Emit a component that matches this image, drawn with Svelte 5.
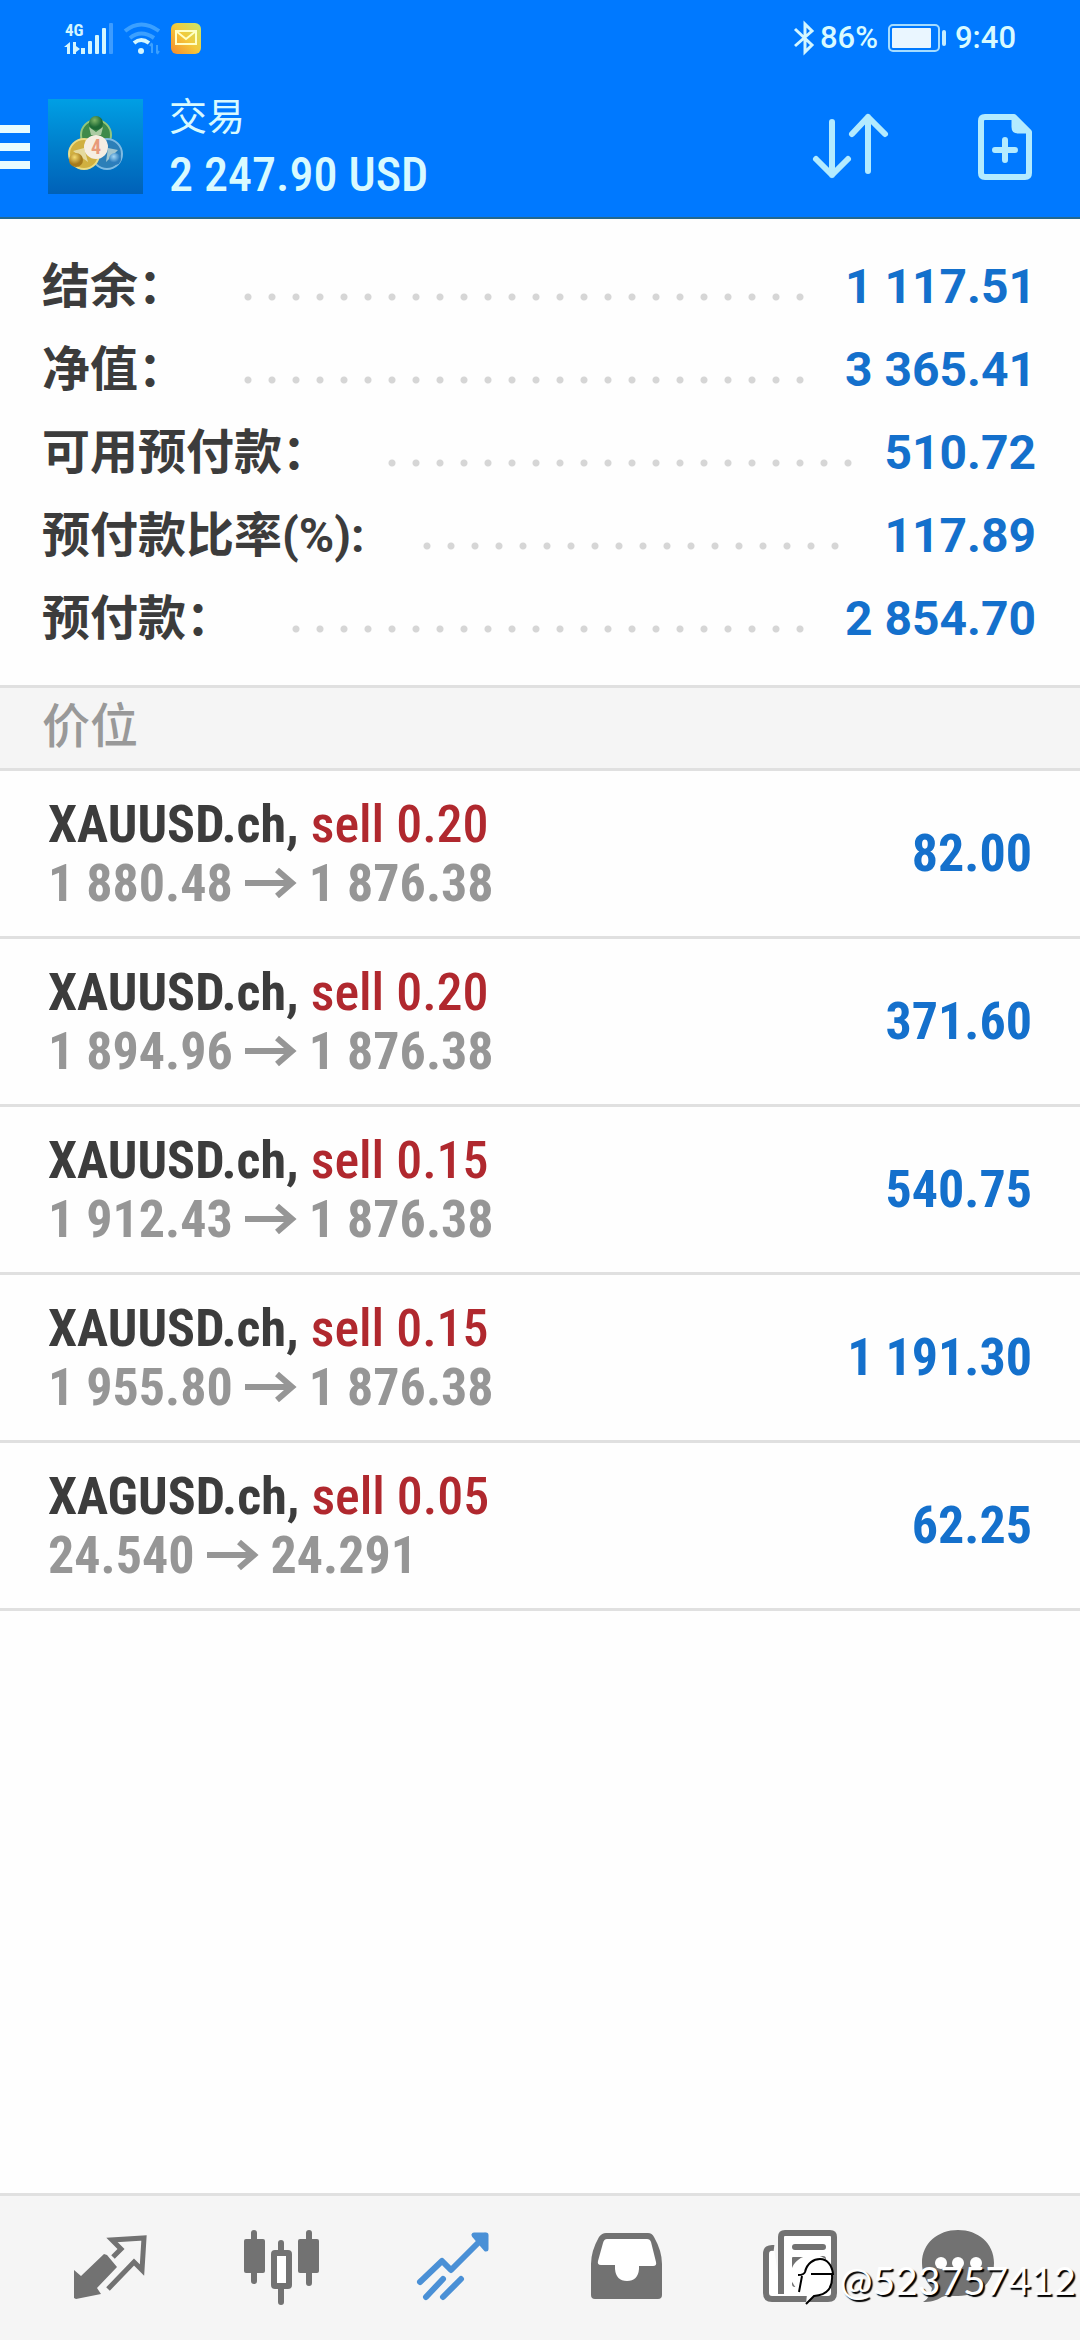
<script>
  const summary = [
    { label: "结余：", value: "1 117.51" },
    { label: "净值：", value: "3 365.41" },
    { label: "可用预付款：", value: "510.72" },
    { label: "预付款比率(%):", value: "117.89" },
    { label: "预付款：", value: "2 854.70" },
  ];

  const positions = [
    { symbol: "XAUUSD.ch", side: "sell 0.20", open: "1 880.48", now: "1 876.38", profit: "82.00" },
    { symbol: "XAUUSD.ch", side: "sell 0.20", open: "1 894.96", now: "1 876.38", profit: "371.60" },
    { symbol: "XAUUSD.ch", side: "sell 0.15", open: "1 912.43", now: "1 876.38", profit: "540.75" },
    { symbol: "XAUUSD.ch", side: "sell 0.15", open: "1 955.80", now: "1 876.38", profit: "1 191.30" },
    { symbol: "XAGUSD.ch", side: "sell 0.05", open: "24.540", now: "24.291", profit: "62.25" },
  ];

  const tabs = ["quotes", "charts", "trade", "history", "news", "messages"];
  let active = $state("trade");
</script>

<div class="screen">
  <header>
    <div class="status">
      <div class="status-left">
        <svg width="50" height="34" viewBox="0 0 50 34" fill="#d3f6ff">
          <text x="1" y="15" font-size="17" font-weight="700" class="net">4G</text>
          <path d="M0 26l6-5v12H3v-7zM9 21h3v4l4 3-4 3v2H9z" />
          <rect x="17" y="27" width="4" height="6" />
          <rect x="24" y="20" width="4" height="13" rx="1" />
          <rect x="31" y="14" width="4" height="19" rx="1" />
          <rect x="38" y="7" width="4" height="26" rx="1" />
          <rect x="45" y="2" width="4" height="31" rx="1" fill="#3d9cff" />
        </svg>
        <svg width="36" height="34" viewBox="0 0 36 34" fill="none" stroke-width="4">
          <path d="M1 10Q17-3 35 10M6 17q11-9 24 0" stroke="#3ba0ff" />
          <path d="M10 22q7-6 15 0" stroke="#d3f6ff" />
          <circle cx="17" cy="30" r="3" fill="#d3f6ff" />
          <path d="M28 23v9m-2-7l2-3M33 24v8m2-2l-2 3" stroke="#3ba0ff" stroke-width="2" />
        </svg>
        <svg width="32" height="34" viewBox="0 0 32 34">
          <defs>
            <linearGradient id="mail" x1="0" y1="1" x2="1" y2="0">
              <stop offset="0" stop-color="#f58a2c" />
              <stop offset="0.5" stop-color="#f4c83a" />
              <stop offset="1" stop-color="#c6e86a" />
            </linearGradient>
          </defs>
          <rect x="1" y="2" width="30" height="31" rx="6" fill="url(#mail)" />
          <path d="M6 10h20v13H6zl10 8 10-8" fill="none" stroke="#ffffc4" stroke-width="2" />
        </svg>
      </div>
      <div class="status-right">
        <svg width="20" height="34" viewBox="0 0 20 34" fill="none" stroke="#d3f6ff" stroke-width="3">
          <path d="M1 8l17 16-7 7V3l7 7L1 25" />
        </svg>
        <span>86%</span>
        <svg class="battery" width="59" height="28" viewBox="0 0 59 28">
          <rect x="1" y="1" width="50" height="26" rx="4" fill="none" stroke="#a5dcff" stroke-width="2" />
          <rect x="4" y="4" width="39" height="20" rx="1" fill="#eaf6ff" />
          <rect x="54" y="6" width="4" height="16" rx="2" fill="#c5edff" />
        </svg>
        <span>9:40</span>
      </div>
    </div>

    <div class="bar">
      <button class="menu" aria-label="Menu"><i></i><i></i><i></i></button>
      <svg class="logo" width="95" height="95" viewBox="0 0 95 95">
        <defs>
          <linearGradient id="bg" x1="0" y1="0" x2="0" y2="1">
            <stop offset="0" stop-color="#009fe4" />
            <stop offset="0.5" stop-color="#007fcc" />
            <stop offset="1" stop-color="#0061b8" />
          </linearGradient>
          <radialGradient id="green" cx="0.4" cy="0.3">
            <stop offset="0" stop-color="#7fb668" />
            <stop offset="1" stop-color="#1e6a35" />
          </radialGradient>
          <radialGradient id="gold" cx="0.4" cy="0.3">
            <stop offset="0" stop-color="#f5dc70" />
            <stop offset="1" stop-color="#a67a1c" />
          </radialGradient>
          <radialGradient id="sky" cx="0.4" cy="0.3">
            <stop offset="0" stop-color="#a5d8f5" />
            <stop offset="1" stop-color="#2c7dbd" />
          </radialGradient>
        </defs>
        <rect width="95" height="95" fill="url(#bg)" />
        <g stroke-width="2">
          <circle cx="48" cy="36" r="15" fill="#3f8a4a" stroke="#93c67c" />
          <circle cx="59" cy="55" r="15" fill="#2c7fb8" stroke="#7fbbe2" />
          <circle cx="36" cy="55" r="15" fill="#d0b040" stroke="#ebdc84" />
        </g>
        <path d="M41 28l7 5 7-5-2 8H43zM25 52l11-3 4 14zM70 51l-10-2-2 14z" fill="#f3f7de" opacity="0.6" />
        <circle cx="48" cy="24" r="7" fill="url(#green)" />
        <circle cx="28" cy="61" r="7" fill="url(#gold)" />
        <circle cx="67" cy="60" r="6" fill="url(#sky)" />
        <circle cx="48" cy="48" r="12" fill="#f6eee2" />
        <text x="48" y="55" text-anchor="middle" font-size="20" font-weight="700" fill="#e89a7a" class="net">4</text>
      </svg>
      <div class="account">
        <h1>交易</h1>
        <p>2 247.90 USD</p>
      </div>
      <div class="actions">
        <button aria-label="Sort">
          <svg width="76" height="70" viewBox="0 0 76 70" fill="none" stroke="#b3ebff" stroke-width="6" stroke-linecap="round" stroke-linejoin="round">
            <path d="M20 10v53M4 47l16 16 16-16M56 59V5M40 22L56 5l17 17" />
          </svg>
        </button>
        <button aria-label="New order">
          <svg width="56" height="70" viewBox="0 0 56 70" fill="none" stroke="#b3ebff" stroke-width="6" stroke-linejoin="round">
            <path d="M9 5h29l15 15v41q0 4-4 4H9q-4 0-4-4V9q0-4 4-4z" />
            <path d="M37 5v10q0 5 5 5h11z" fill="#b3ebff" stroke-width="3" />
            <path d="M29 28v20M19 38h20" stroke-linecap="round" />
          </svg>
        </button>
      </div>
    </div>
  </header>

  <dl class="summary">
    {#each summary as row}
      <div class="line">
        <dt>{row.label}</dt>
        <span class="dots"></span>
        <dd>{row.value}</dd>
      </div>
    {/each}
  </dl>

  <h2>价位</h2>

  <ul class="positions">
    {#each positions as p}
      <li>
        <div>
          <p class="deal"><b>{p.symbol},</b> <span>{p.side}</span></p>
          <p class="prices">
            {p.open}
            <svg width="52" height="30" viewBox="0 0 52 30" fill="none" stroke="#969696" stroke-width="6">
              <path d="M0 15h48M32 2l15 13-15 13" />
            </svg>
            {p.now}
          </p>
        </div>
        <strong>{p.profit}</strong>
      </li>
    {/each}
  </ul>

  <nav>
    {#each tabs as tab}
      <button class:active={active === tab} aria-label={tab} onclick={() => (active = tab)}>
        <svg width="96" height="96" viewBox="0 0 96 96" fill="currentColor" stroke="currentColor" stroke-width="0">
          {#if tab === "quotes"}
            <path d="M12 50l7 6 23-22 3 1 10 12-20 21 4 6-25 5-2-1z" />
            <path d="M51 37l8-8-9-9 32-2-2 32-8-8-26 27" fill="none" stroke-width="5" />
          {:else if tab === "charts"}
            <rect x="10" y="19" width="21" height="34" rx="2" />
            <rect x="64" y="19" width="21" height="34" rx="2" />
            <path d="M20 13v48M75 13v50M47 23v10M47 66v16" stroke-width="6" stroke-linecap="round" />
            <rect x="40" y="33" width="15" height="33" rx="1" fill="#fff" stroke-width="6" />
          {:else if tab === "trade"}
            <path d="M14 62l22-21 9 9 34-34M20 77l17-18M37 77l18-18" fill="none" stroke-width="6" stroke-linecap="round" stroke-linejoin="round" />
            <path d="M68 15h12v14z" stroke-width="5" stroke-linejoin="round" />
          {:else if tab === "history"}
            <path d="M28 13h42q4 0 6 4 8 14 8 27v31q0 4-4 4H17q-4 0-4-4V44q0-13 8-27 3-4 7-4z" />
            <path d="M29 19h40q3 0 4 3l5 20q1 4-3 4H61v3q-1 12-12 12T37 49v-4H23q-4 0-3-4l5-18q1-4 4-4z" fill="#fff" />
          {:else if tab === "news"}
            <path d="M24 28q-8-1-8 6v39q0 6 6 6h56q6 0 6-6V17q0-4-4-4H35q-4 0-4 4v57" fill="#fff" stroke-width="6" />
            <path d="M45 27h28M64 39h9M64 51h9M45 64h28" stroke-width="6" stroke-linecap="round" />
            <rect x="42" y="37" width="14" height="17" rx="1" />
          {:else}
            <path d="M36 10c20 0 36 13 36 33S56 76 36 76c-7 0-12-1-16 1-6 4-12 5-19 5 5-3 8-8 9-14C4 62 0 53 0 43c0-20 16-33 36-33z" />
            <g fill="#fff">
              <circle cx="19" cy="43" r="6" />
              <circle cx="36" cy="43" r="6" />
              <circle cx="54" cy="43" r="6" />
            </g>
          {/if}
        </svg>
      </button>
    {/each}
    <div class="mark">
      <svg width="46" height="52" viewBox="0 0 46 52">
        <path d="M23 1c12 0 20 8 20 20 0 13-8 19-19 21l-8 8 1-10C7 38 1 30 1 20 1 9 11 1 23 1z" fill="#fff" />
        <path d="M8 21q6 0 7-3C17 9 24 5 30 5c7 0 12 6 13 15H21M12 22L9 38M42 21c1 12-4 20-18 21l-8 8" fill="none" stroke="#000" stroke-width="2" />
      </svg>
      <span>@523757412</span>
    </div>
  </nav>
</div>

<style>
  :global(body) {
    background: #fefefe;
  }

  .screen {
    display: flex;
    flex-direction: column;
    min-height: 100vh;
    font-family: Roboto, "Noto Sans CJK SC", sans-serif;
    color: #3c3c3c;
  }

  h1, h2, p, dl, dd, ul {
    margin: 0;
    padding: 0;
  }

  button {
    padding: 0;
    border: 0;
    background: none;
    color: inherit;
  }

  svg {
    display: block;
    flex: none;
    overflow: visible;
  }

  .net {
    font-family: "Roboto Condensed", Roboto, sans-serif;
  }

  header {
    background: #0079ff;
    border-bottom: 2px solid #24698f;
    color: #d8faff;
  }

  .status {
    display: flex;
    justify-content: space-between;
    padding: 20px 64px 0;
    height: 36px;
    font-size: 31px;
    line-height: 36px;
    font-weight: 500;
  }

  .status-left,
  .status-right {
    display: flex;
    align-items: center;
  }

  .status-left {
    gap: 10px;
  }

  .status-right {
    gap: 6px;
  }

  .battery {
    margin: 0 2px 0 4px;
  }

  .bar {
    display: flex;
    align-items: center;
    height: 141px;
    padding: 20px 48px 0 0;
  }

  .menu {
    display: flex;
    flex-direction: column;
    gap: 10px;
    width: 30px;
    margin-right: 18px;
  }

  .menu i {
    height: 8px;
    background: #e8fdff;
  }

  .account {
    margin-left: 26px;
    padding-top: 4px;
  }

  h1 {
    font-size: 38px;
    line-height: 52px;
    font-weight: 400;
  }

  .account p {
    font-family: "Roboto Condensed", Roboto, sans-serif;
    font-size: 48px;
    line-height: 64px;
    font-weight: 500;
  }

  .actions {
    display: flex;
    gap: 88px;
    margin-left: auto;
  }

  .summary {
    padding: 26px 44px 25px 42px;
  }

  .line {
    display: flex;
    align-items: center;
    height: 83px;
    font-size: 48px;
    line-height: 83px;
    font-weight: 700;
  }

  dt {
    white-space: nowrap;
  }

  .dots {
    flex: 1;
    margin: 20px 18px 0 50px;
  }

  /* keeps the leader to whole dots */
  .dots::after {
    content: "";
    display: block;
    width: round(down, 100%, 24px);
    height: 8px;
    background: radial-gradient(circle, #d6d6d6 3px, transparent 4px) 0 0 / 24px 8px;
  }

  dd {
    color: #1470cc;
  }

  h2 {
    padding: 0 42px 2px;
    border: solid #e0e0e0;
    border-width: 3px 0;
    background: #f5f5f5;
    color: #999;
    font-size: 48px;
    line-height: 78px;
    font-weight: 500;
  }

  .positions {
    list-style: none;
    font-family: "Roboto Condensed", Roboto, sans-serif;
    font-size: 52px;
    line-height: 59px;
  }

  li {
    display: flex;
    align-items: center;
    justify-content: space-between;
    height: 165px;
    padding: 0 48px;
    border-bottom: 3px solid #e0e0e0;
  }

  .deal span {
    color: #b0282e;
    font-weight: 500;
  }

  .prices {
    display: flex;
    align-items: center;
    gap: 12px;
    color: #969696;
    font-weight: 700;
  }

  strong {
    color: #1470cc;
  }

  nav {
    position: relative;
    display: flex;
    height: 120px;
    margin-top: auto;
    padding: 24px 24px 0;
    border-top: 3px solid #e0e0e0;
    background: #f5f5f5;
    color: #727272;
  }

  nav button {
    display: flex;
    flex: 1;
    justify-content: center;
  }

  nav .active {
    color: #4a90d6;
  }

  .mark {
    position: absolute;
    right: 4px;
    bottom: 32px;
    display: flex;
    align-items: center;
    gap: 4px;
    color: #fff;
    font-family: Lato, sans-serif;
    font-size: 39px;
    line-height: 56px;
    font-weight: 400;
    text-shadow: 2px 2px 1px #000;
  }
</style>
